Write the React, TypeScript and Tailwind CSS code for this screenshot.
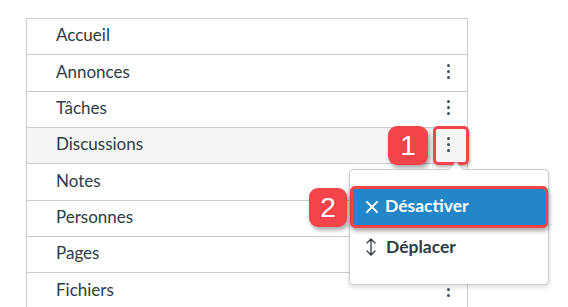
import { FC } from 'react';

const rows = [
  { label: 'Accueil', menu: false },
  { label: 'Annonces', menu: true },
  { label: 'Tâches', menu: true },
  { label: 'Discussions', menu: true, active: true },
  { label: 'Notes', menu: true },
  { label: 'Personnes', menu: true },
  { label: 'Pages', menu: true },
  { label: 'Fichiers', menu: true },
];

const Kebab: FC = () => (
  <div className="flex flex-col items-center gap-[3px]">
    <span className="h-[3px] w-[3px] rounded-full bg-[#3d4f66]" />
    <span className="h-[3px] w-[3px] rounded-full bg-[#3d4f66]" />
    <span className="h-[3px] w-[3px] rounded-full bg-[#3d4f66]" />
  </div>
);

const Badge: FC<{ n: string; className: string }> = ({ n, className }) => (
  <div
    className={`absolute flex items-center justify-center rounded-[9px] bg-[#f2444a] text-[28px] leading-none text-white shadow-[2px_3px_4px_rgba(0,0,0,0.35)] ${className}`}
    style={{ fontFamily: 'Arial, "Liberation Sans", sans-serif' }}
  >
    {n}
  </div>
);

const App: FC = () => {
  return (
    <div
      className="relative h-[307px] w-[568px] overflow-hidden bg-white"
      style={{ fontFamily: 'Lato, "Noto Sans", sans-serif' }}
    >
      <div className="ml-[26px] mt-[18px] w-[442px] border-x border-[#c7cdd1]">
        {rows.map((r) => (
          <div
            key={r.label}
            className={`flex h-[36.33px] items-center justify-between border-t border-[#c7cdd1] pb-[3px] pl-[29px] pr-[17px] text-[17px] text-[#2d3b45] ${
              r.active ? 'bg-[#f5f5f5]' : 'bg-white'
            }`}
          >
            <span>{r.label}</span>
            {r.menu && <Kebab />}
          </div>
        ))}
      </div>

      {/* highlight around kebab */}
      <div className="absolute left-[433px] top-[126px] h-[39px] w-[36px] rounded-[5px] border-[3px] border-[#f2444a] shadow-[1px_2px_3px_rgba(0,0,0,0.3)]" />
      <Badge n="1" className="left-[388px] top-[126px] h-[39px] w-[40px]" />

      {/* menu */}
      <div className="absolute left-[349px] top-[169px] h-[116px] w-[200px] rounded-[4px] border border-[#c7cdd1] bg-white shadow-[0_2px_4px_rgba(0,0,0,0.15)]">
        <div className="absolute -top-[6px] left-[101px] h-[10px] w-[10px] rotate-45 border-l border-t border-[#c7cdd1] bg-white" />
        <div className="mt-[16px] flex flex-col">
          <div className="flex h-[42px] items-center rounded-[5px] border-[3px] border-[#f2444a] bg-[#2286c8] pb-[2px] pl-[12px] text-[17.5px] font-bold text-white shadow-[1px_3px_4px_rgba(0,0,0,0.35)]">
            <svg width="14" height="14" viewBox="0 0 14 14" className="mr-[6px] mt-[2px]">
              <path d="M2 2 L12 12 M12 2 L2 12" stroke="white" strokeWidth="1.8" strokeLinecap="round" />
            </svg>
            Désactiver
          </div>
          <div className="flex h-[38px] items-center pl-[15px] text-[17.5px] font-bold text-[#2d3b45]">
            <svg width="12" height="20" viewBox="0 0 12 20" className="mr-[9px]">
              <path
                d="M6 2 L6 18 M2 6 L6 2 L10 6 M2 14 L6 18 L10 14"
                stroke="#2d3b45"
                strokeWidth="1.3"
                fill="none"
                strokeLinecap="round"
                strokeLinejoin="round"
              />
            </svg>
            Déplacer
          </div>
        </div>
      </div>
      <Badge n="2" className="left-[309px] top-[188px] h-[39px] w-[38px]" />
    </div>
  );
};

export default App;
